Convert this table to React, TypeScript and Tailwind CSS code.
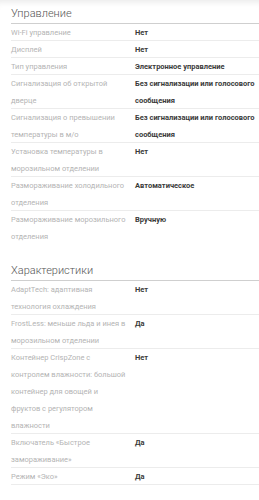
import React from "react";

type Row = { label: string; value: string };

const control: Row[] = [
  { label: "Wi-Fi управление", value: "Нет" },
  { label: "Дисплей", value: "Нет" },
  { label: "Тип управления", value: "Электронное управление" },
  { label: "Сигнализация об открытой дверце", value: "Без сигнализации или голосового сообщения" },
  { label: "Сигнализация о превышении температуры в м/о", value: "Без сигнализации или голосового сообщения" },
  { label: "Установка температуры в морозильном отделении", value: "Нет" },
  { label: "Размораживание холодильного отделения", value: "Автоматическое" },
  { label: "Размораживание морозильного отделения", value: "Вручную" },
];

const features: Row[] = [
  { label: "AdaptTech: адаптивная технология охлаждения", value: "Нет" },
  { label: "FrostLess: меньше льда и инея в морозильном отделении", value: "Да" },
  {
    label: "Контейнер CrispZone с контролем влажности: большой контейнер для овощей и фруктов с регулятором влажности",
    value: "Нет",
  },
  { label: "Включатель «Быстрое замораживание»", value: "Да" },
  { label: "Режим «Эко»", value: "Да" },
];

function Section({ title, rows, lastBorder }: { title: string; rows: Row[]; lastBorder: boolean }) {
  return (
    <section>
      <h2 className="pt-[6px] pb-[1px] text-[11px] leading-[16px] font-light text-[#555] border-b border-[#cfcfcf]">
        {title}
      </h2>
      {rows.map((r, i) => {
        const line = i < rows.length - 1 || lastBorder;
        return (
          <div
            key={r.label}
            className={
              "grid grid-cols-[124px_1fr] text-[7.5px] leading-[17px] " +
              (line ? "shadow-[inset_0_-1px_0_#ececec]" : "")
            }
          >
            <div className="pr-[6px] text-[#b4b4b4]">{r.label}</div>
            <div className="font-bold text-[#3a3a3a]">{r.value}</div>
          </div>
        );
      })}
    </section>
  );
}

export default function App() {
  return (
    <div
      className="w-[259px] h-[500px] overflow-hidden bg-white pl-[11px] shadow-[inset_0_7px_6px_-5px_rgba(0,0,0,0.09)]"
      style={{ fontFamily: 'Roboto, "Liberation Sans", Arial, sans-serif' }}
    >
      <div className="w-[256px]">
        <Section title="Управление" rows={control} lastBorder={false} />
        <div className="mt-[12px]">
          <Section title="Характеристики" rows={features} lastBorder={true} />
        </div>
      </div>
    </div>
  );
}
